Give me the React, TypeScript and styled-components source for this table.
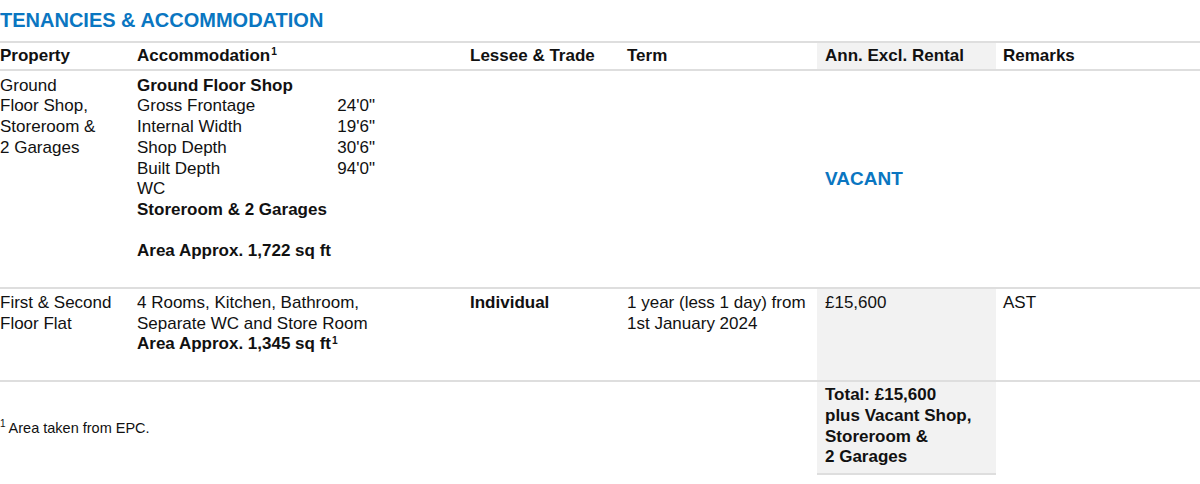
import React from "react";
import styled, { createGlobalStyle } from "styled-components";

const Global = createGlobalStyle`
  html, body { margin: 0; padding: 0; background: #fff; }
  body {
    font-family: "Liberation Sans", Arial, sans-serif;
    color: #111;
    font-size: 17px;
    line-height: 20.7px;
  }
`;

const Page = styled.div`
  width: 1200px;
`;

const Title = styled.h2`
  margin: 8px 0 9px 0;
  font-size: 20px;
  line-height: 24px;
  font-weight: 700;
  color: #0a76c1;
  letter-spacing: 0;
`;

const Row = styled.div<{ $top?: boolean; $noBottom?: boolean }>`
  display: grid;
  grid-template-columns: 137px 333px 157px 190px 179px 1fr;
  border-top: ${(p) => (p.$top ? "2px solid #dedede" : "none")};
  border-bottom: ${(p) => (p.$noBottom ? "none" : "2px solid #dedede")};
`;

const Cell = styled.div<{ $pt: number; $pb: number; $shade?: boolean; $indent?: number; $bold?: boolean }>`
  padding: ${(p) => p.$pt}px 6px ${(p) => p.$pb}px ${(p) => p.$indent ?? 0}px;
  background: ${(p) => (p.$shade ? "#f2f2f2" : "transparent")};
  font-weight: ${(p) => (p.$bold ? 700 : 400)};
`;

const MiddleCell = styled.div<{ $indent?: number }>`
  display: flex;
  align-items: center;
  padding-left: ${(p) => p.$indent ?? 0}px;
`;

const Vacant = styled.span`
  color: #0a76c1;
  font-weight: 700;
  font-size: 19px;
`;

const Sup = styled.sup`
  font-size: 0.6em;
  line-height: 0;
  vertical-align: 0.55em;
  margin-left: 1px;
`;

const Bold = styled.div`
  font-weight: 700;
`;

const Blank = styled.div`
  height: 20.7px;
`;

const Dims = styled.div`
  display: grid;
  grid-template-columns: 190px 48px;
`;

const DimValue = styled.div`
  text-align: right;
`;

const Footnote = styled.div`
  grid-column: 1 / 5;
  display: flex;
  align-items: center;
  font-size: 14.5px;
`;

const FootSup = styled.span`
  font-size: 10px;
  line-height: 0;
  position: relative;
  top: -5px;
  margin-right: 3px;
`;

const TotalCell = styled.div`
  grid-column: 5;
  background: #f2f2f2;
  padding: 3px 6px 5px 8px;
  font-weight: 700;
  border-bottom: 2px solid #dedede;
`;

const dims: [string, string][] = [
  ["Gross Frontage", "24'0\""],
  ["Internal Width", "19'6\""],
  ["Shop Depth", "30'6\""],
  ["Built Depth", "94'0\""],
];

export default function App() {
  return (
    <Page>
      <Global />
      <Title>TENANCIES &amp; ACCOMMODATION</Title>

      <Row $top>
        <Cell $pt={3} $pb={2} $bold>Property</Cell>
        <Cell $pt={3} $pb={2} $bold>
          Accommodation<Sup>1</Sup>
        </Cell>
        <Cell $pt={3} $pb={2} $bold>Lessee &amp; Trade</Cell>
        <Cell $pt={3} $pb={2} $bold>Term</Cell>
        <Cell $pt={3} $pb={2} $bold $shade $indent={8}>Ann. Excl. Rental</Cell>
        <Cell $pt={3} $pb={2} $bold $indent={7}>Remarks</Cell>
      </Row>

      <Row>
        <Cell $pt={5} $pb={25}>
          Ground
          <br />
          Floor Shop,
          <br />
          Storeroom &amp;
          <br />2 Garages
        </Cell>
        <Cell $pt={5} $pb={25}>
          <Bold>Ground Floor Shop</Bold>
          <Dims>
            {dims.map(([k, v]) => (
              <React.Fragment key={k}>
                <div>{k}</div>
                <DimValue>{v}</DimValue>
              </React.Fragment>
            ))}
          </Dims>
          <div>WC</div>
          <Bold>Storeroom &amp; 2 Garages</Bold>
          <Blank />
          <Bold>Area Approx. 1,722 sq ft</Bold>
        </Cell>
        <Cell $pt={5} $pb={25} />
        <Cell $pt={5} $pb={25} />
        <MiddleCell $indent={8}>
          <Vacant>VACANT</Vacant>
        </MiddleCell>
        <Cell $pt={5} $pb={25} />
      </Row>

      <Row>
        <Cell $pt={4} $pb={25}>
          First &amp; Second
          <br />
          Floor Flat
        </Cell>
        <Cell $pt={4} $pb={25}>
          4 Rooms, Kitchen, Bathroom,
          <br />
          Separate WC and Store Room
          <Bold>
            Area Approx. 1,345 sq ft<Sup>1</Sup>
          </Bold>
        </Cell>
        <Cell $pt={4} $pb={25} $bold>Individual</Cell>
        <Cell $pt={4} $pb={25}>
          1 year (less 1 day) from
          <br />
          1st January 2024
        </Cell>
        <Cell $pt={4} $pb={25} $shade $indent={8}>£15,600</Cell>
        <Cell $pt={4} $pb={25} $indent={7}>AST</Cell>
      </Row>

      <Row $noBottom>
        <Footnote>
          <FootSup>1</FootSup>Area taken from EPC.
        </Footnote>
        <TotalCell>
          Total: £15,600
          <br />
          plus Vacant Shop,
          <br />
          Storeroom &amp;
          <br />2 Garages
        </TotalCell>
      </Row>
    </Page>
  );
}
